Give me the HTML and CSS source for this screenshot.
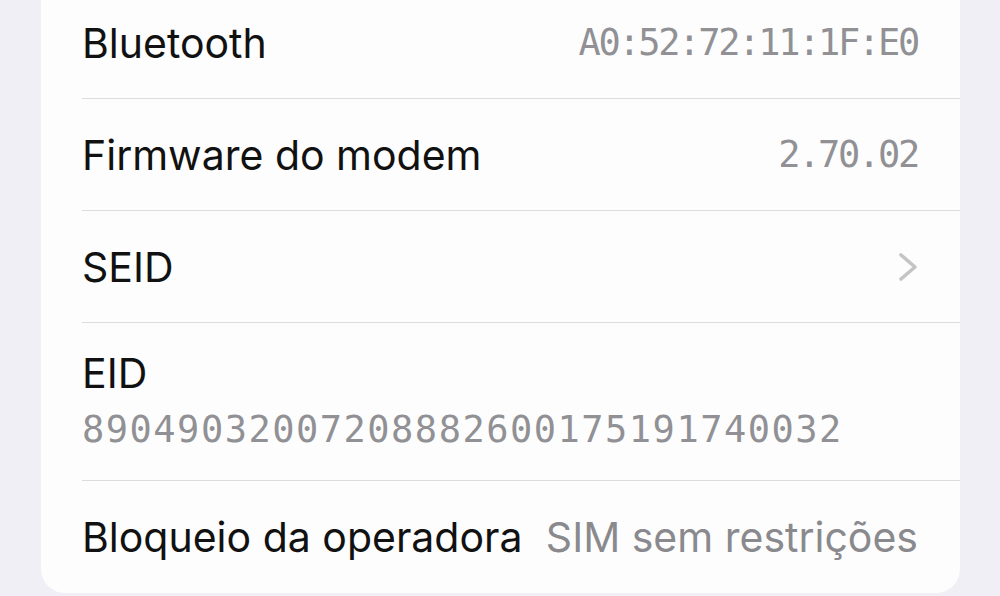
FILE: index.html
```html
<!DOCTYPE html>
<html lang="pt">
<head>
<meta charset="utf-8">
<link rel="stylesheet" href="styles.css">
</head>
<body>
<div class="page">
  <div class="card">
    <div class="row">
      <div class="row-inner">
        <span class="label">Bluetooth</span>
        <span class="value mono">A0:52:72:11:1F:E0</span>
      </div>
    </div>
    <div class="row">
      <div class="row-inner">
        <span class="label">Firmware do modem</span>
        <span class="value mono">2.70.02</span>
      </div>
    </div>
    <div class="row">
      <div class="row-inner">
        <span class="label">SEID</span>
        <svg class="chevron" width="20" height="30" viewBox="0 0 20 30" aria-hidden="true">
          <path d="M3 3 L17 15 L3 27" fill="none" stroke="#c4c4c7" stroke-width="3.6" stroke-linecap="round" stroke-linejoin="round"/>
        </svg>
      </div>
    </div>
    <div class="row">
      <div class="row-inner stacked">
        <span class="label">EID</span>
        <span class="value mono eid">89049032007208882600175191740032</span>
      </div>
    </div>
    <div class="row last">
      <div class="row-inner">
        <span class="label">Bloqueio da operadora</span>
        <span class="value">SIM sem restrições</span>
      </div>
    </div>
  </div>
</div>
</body>
</html>
```

FILE: styles.css
```css
* { box-sizing: border-box; }
html, body {
  margin: 0;
  padding: 0;
  background: #f0eff5;
  overflow: hidden;
}
body {
  width: 1000px;
  height: 596px;
  font-family: Inter, "Noto Sans", "Liberation Sans", sans-serif;
}
.page {
  padding: 0 40px 0 41px;
}
.card {
  margin-top: -13px;
  background: #fdfdfd;
  border-radius: 0 0 24px 24px;
  display: flex;
  flex-direction: column;
}
.row {
  padding-left: 41px;
}
.row-inner {
  height: 112px;
  border-bottom: 1px solid #dcdcde;
  padding-right: 42px;
  display: flex;
  align-items: center;
  justify-content: space-between;
}
.row.last .row-inner {
  border-bottom: none;
}
.row-inner.stacked {
  height: 158px;
  flex-direction: column;
  align-items: flex-start;
  justify-content: flex-start;
  padding-top: 28px;
  gap: 13px;
}
.label {
  font-size: 41px;
  color: #111;
  line-height: 44px;
  letter-spacing: 0;
}
.value {
  font-size: 41px;
  color: #8a8a8e;
  line-height: 44px;
  letter-spacing: 0;
}
.mono {
  font-family: "DejaVu Sans Mono", "Liberation Mono", monospace;
  font-size: 37px;
  letter-spacing: -2.3px;
  color: #919195;
}
.mono.eid {
  letter-spacing: 1.5px;
}
.chevron {
  display: block;
}
```
